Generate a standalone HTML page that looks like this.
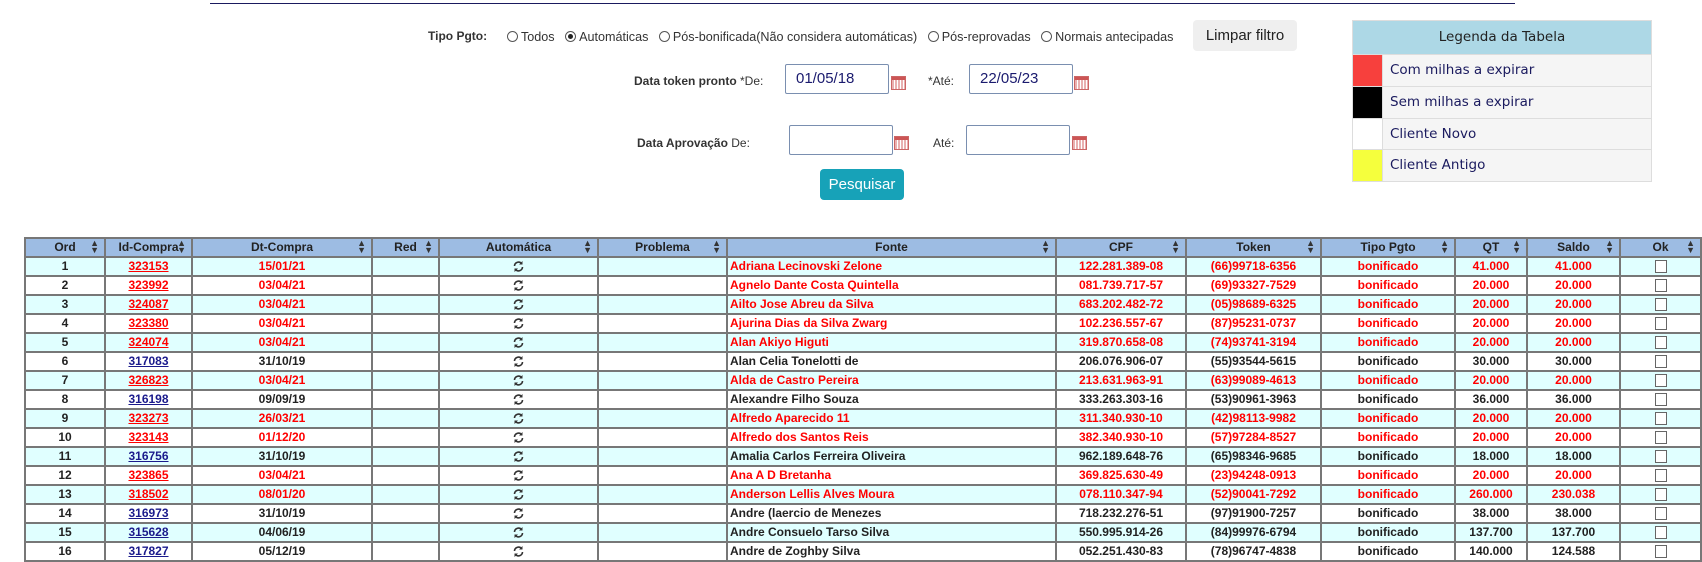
<!DOCTYPE html>
<html><head><meta charset="utf-8"><style>
*{box-sizing:border-box;margin:0;padding:0}
body{width:1702px;height:558px;overflow:hidden;background:#fff;font-family:"Liberation Sans","DejaVu Sans",sans-serif;position:relative}
.abs{position:absolute}
.topline{left:210px;top:3px;width:1305px;height:1px;background:#1a1a5e}
.lbl{font-size:12px;color:#333;white-space:nowrap}
.radio{display:inline-block;width:11px;height:11px;border:1px solid #555;border-radius:50%;vertical-align:-1px;margin-right:3px;position:relative}
.radio.on::after{content:"";position:absolute;left:2px;top:2px;width:5px;height:5px;border-radius:50%;background:#222}
.inp{border:1px solid #7a8fb0;border-radius:2px;background:#fff;font-size:15px;color:#1a1a6e;padding:5px 0 0 10px}
.cal{width:15px;height:14px;border:1px solid #c66;background:repeating-linear-gradient(90deg,#e9b0b0 0 2px,#fff 2px 3px);}
.cal::before{content:"";display:block;height:3px;background:#c55}
.btn{border-radius:4px;font-size:15px;text-align:center}
.leg{left:1352px;top:20px;width:300px;border:1px solid #ddd;font-family:"DejaVu Sans",sans-serif;font-size:13.5px;color:#1a1a5e}
.leg .h{background:#add8e6;height:33px;line-height:33px;text-align:center;color:#222}
.leg .r{height:31.8px;display:flex;background:#f5f5f5;border-top:1px solid #ddd}
.leg .s{width:29px}
.leg .t{padding-left:7px;line-height:30px;border-left:1px solid #ddd}
table{position:absolute;left:24px;top:237px;width:1677px;border-collapse:collapse;table-layout:fixed;font-size:12px;font-weight:bold}
td,th{border:2px solid #777;height:19px;text-align:center;white-space:nowrap;overflow:hidden;padding:0 2px;line-height:15px}
th{background:#9dbce3;color:#222;position:relative}
th span{position:absolute;right:5px;top:1px;font-size:9px;line-height:7px;color:#333}
tr:nth-child(odd) td{background:#e0ffff}
td.f{text-align:left}
.r td{color:#f00}
.r td:first-child{color:#222}
.k td{color:#222}
a{text-decoration:underline}
.r a{color:#f00}
.k a{color:#1a1a8c}
.cb{display:inline-block;width:12px;height:13px;border:1px solid #666;background:#fff;vertical-align:middle}
</style></head><body>
<div class="abs topline"></div>
<div class="abs lbl" style="left:428px;top:29px;font-weight:bold">Tipo Pgto:</div>
<div class="abs lbl" style="left:507px;top:30px;font-size:12.6px"><span class="radio"></span>Todos &nbsp;&nbsp;<span class="radio on"></span>Automáticas &nbsp;&nbsp;<span class="radio"></span>Pós-bonificada(Não considera automáticas) &nbsp;&nbsp;<span class="radio"></span>Pós-reprovadas &nbsp;&nbsp;<span class="radio"></span>Normais antecipadas</div>
<div class="abs btn" style="left:1193px;top:20px;width:104px;height:31px;background:#efefef;line-height:31px;color:#222">Limpar filtro</div>
<div class="abs lbl" style="left:634px;top:74px"><b>Data token pronto</b> *De:</div>
<div class="abs inp" style="left:785px;top:64px;width:104px;height:30px">01/05/18</div>
<div class="abs cal" style="left:891px;top:76px"></div>
<div class="abs lbl" style="left:928px;top:74px">*Até:</div>
<div class="abs inp" style="left:969px;top:64px;width:104px;height:30px">22/05/23</div>
<div class="abs cal" style="left:1074px;top:76px"></div>
<div class="abs lbl" style="left:637px;top:136px"><b>Data Aprovação</b> De:</div>
<div class="abs inp" style="left:789px;top:125px;width:104px;height:30px"></div>
<div class="abs cal" style="left:894px;top:136px"></div>
<div class="abs lbl" style="left:933px;top:136px">Até:</div>
<div class="abs inp" style="left:966px;top:125px;width:104px;height:30px"></div>
<div class="abs cal" style="left:1072px;top:136px"></div>
<div class="abs btn" style="left:820px;top:169px;width:84px;height:31px;background:#17a2b8;color:#fff;line-height:31px">Pesquisar</div>
<div class="abs leg">
<div class="h">Legenda da Tabela</div>
<div class="r"><div class="s" style="background:#f7403d"></div><div class="t">Com milhas a expirar</div></div>
<div class="r"><div class="s" style="background:#000"></div><div class="t">Sem milhas a expirar</div></div>
<div class="r"><div class="s" style="background:#fff"></div><div class="t">Cliente Novo</div></div>
<div class="r"><div class="s" style="background:#f5ff3d"></div><div class="t">Cliente Antigo</div></div>
</div>
<table>
<colgroup><col style="width:80px"><col style="width:87px"><col style="width:180px"><col style="width:67px"><col style="width:159px"><col style="width:129px"><col style="width:329px"><col style="width:130px"><col style="width:135px"><col style="width:134px"><col style="width:72px"><col style="width:93px"><col style="width:81px"></colgroup>
<tr><th>Ord<span>▲<br>▼</span></th><th>Id-Compra<span>▲<br>▼</span></th><th>Dt-Compra<span>▲<br>▼</span></th><th>Red<span>▲<br>▼</span></th><th>Automática<span>▲<br>▼</span></th><th>Problema<span>▲<br>▼</span></th><th>Fonte<span>▲<br>▼</span></th><th>CPF<span>▲<br>▼</span></th><th>Token<span>▲<br>▼</span></th><th>Tipo Pgto<span>▲<br>▼</span></th><th>QT<span>▲<br>▼</span></th><th>Saldo<span>▲<br>▼</span></th><th>Ok<span>▲<br>▼</span></th></tr>
<tbody id="b"></tbody>
</table>
<script>
var d=[
["r",1,"323153","15/01/21","Adriana Lecinovski Zelone","122.281.389-08","(66)99718-6356","41.000","41.000"],
["r",2,"323992","03/04/21","Agnelo Dante Costa Quintella","081.739.717-57","(69)93327-7529","20.000","20.000"],
["r",3,"324087","03/04/21","Ailto Jose Abreu da Silva","683.202.482-72","(05)98689-6325","20.000","20.000"],
["r",4,"323380","03/04/21","Ajurina Dias da Silva Zwarg","102.236.557-67","(87)95231-0737","20.000","20.000"],
["r",5,"324074","03/04/21","Alan Akiyo Higuti","319.870.658-08","(74)93741-3194","20.000","20.000"],
["k",6,"317083","31/10/19","Alan Celia Tonelotti de","206.076.906-07","(55)93544-5615","30.000","30.000"],
["r",7,"326823","03/04/21","Alda de Castro Pereira","213.631.963-91","(63)99089-4613","20.000","20.000"],
["k",8,"316198","09/09/19","Alexandre Filho Souza","333.263.303-16","(53)90961-3963","36.000","36.000"],
["r",9,"323273","26/03/21","Alfredo Aparecido 11","311.340.930-10","(42)98113-9982","20.000","20.000"],
["r",10,"323143","01/12/20","Alfredo dos Santos Reis","382.340.930-10","(57)97284-8527","20.000","20.000"],
["k",11,"316756","31/10/19","Amalia Carlos Ferreira Oliveira","962.189.648-76","(65)98346-9685","18.000","18.000"],
["r",12,"323865","03/04/21","Ana A D Bretanha","369.825.630-49","(23)94248-0913","20.000","20.000"],
["r",13,"318502","08/01/20","Anderson Lellis Alves Moura","078.110.347-94","(52)90041-7292","260.000","230.038"],
["k",14,"316973","31/10/19","Andre (laercio de Menezes","718.232.276-51","(97)91900-7257","38.000","38.000"],
["k",15,"315628","04/06/19","Andre Consuelo Tarso Silva","550.995.914-26","(84)99976-6794","137.700","137.700"],
["k",16,"317827","05/12/19","Andre de Zoghby Silva","052.251.430-83","(78)96747-4838","140.000","124.588"]];
var ic='<svg width="13" height="13" viewBox="0 0 13 13" style="vertical-align:middle"><path d="M2.5 6a4 4 0 0 1 7-2.5M10.5 7a4 4 0 0 1-7 2.5" fill="none" stroke="#333" stroke-width="1.6"/><path d="M10.5 1v3.5H7zM2.5 12V8.5H6z" fill="#333"/></svg>';
var h="";d.forEach(function(x){h+='<tr class="'+x[0]+'"><td>'+x[1]+'</td><td><a>'+x[2]+'</a></td><td>'+x[3]+'</td><td></td><td>'+ic+'</td><td></td><td class="f">'+x[4]+'</td><td>'+x[5]+'</td><td>'+x[6]+'</td><td>bonificado</td><td>'+x[7]+'</td><td>'+x[8]+'</td><td><span class="cb"></span></td></tr>'});
document.getElementById("b").innerHTML=h;
</script>
</body></html>
